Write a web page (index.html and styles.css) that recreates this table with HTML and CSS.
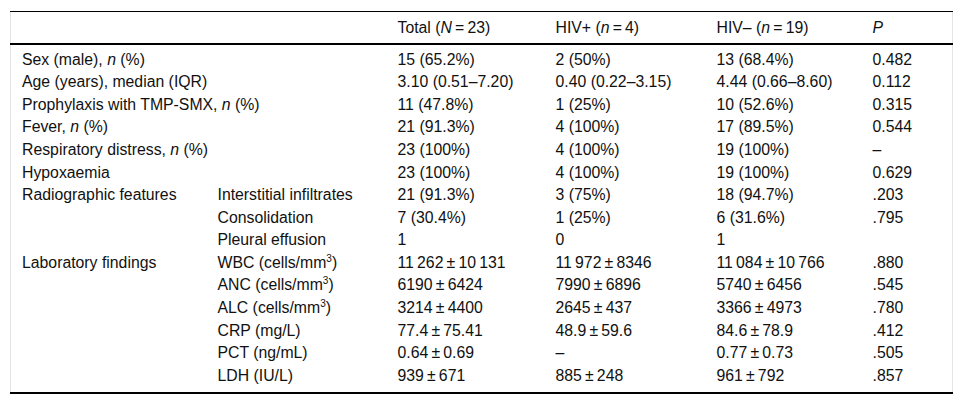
FILE: index.html
```html
<!DOCTYPE html>
<html>
<head>
<meta charset="utf-8">
<link rel="stylesheet" href="styles.css">
</head>
<body>
<div class="wrap">
<table class="data">
<colgroup>
<col class="c1"><col class="c2"><col class="c3"><col class="c4"><col class="c5"><col class="c6">
</colgroup>
<thead>
<tr><th></th><th></th><th>Total (<i>N</i>&#8201;=&#8201;23)</th><th>HIV+ (<i>n</i>&#8201;=&#8201;4)</th><th>HIV&#8211; (<i>n</i>&#8201;=&#8201;19)</th><th><i>P</i></th></tr>
</thead>
<tbody>
<tr class="first"><td colspan="2">Sex (male), <i>n</i> (%)</td><td>15 (65.2%)</td><td>2 (50%)</td><td>13 (68.4%)</td><td>0.482</td></tr>
<tr><td colspan="2">Age (years), median (IQR)</td><td>3.10 (0.51&#8211;7.20)</td><td>0.40 (0.22&#8211;3.15)</td><td>4.44 (0.66&#8211;8.60)</td><td>0.112</td></tr>
<tr><td colspan="2">Prophylaxis with TMP-SMX, <i>n</i> (%)</td><td>11 (47.8%)</td><td>1 (25%)</td><td>10 (52.6%)</td><td>0.315</td></tr>
<tr><td colspan="2">Fever, <i>n</i> (%)</td><td>21 (91.3%)</td><td>4 (100%)</td><td>17 (89.5%)</td><td>0.544</td></tr>
<tr><td colspan="2">Respiratory distress, <i>n</i> (%)</td><td>23 (100%)</td><td>4 (100%)</td><td>19 (100%)</td><td>&#8211;</td></tr>
<tr><td colspan="2">Hypoxaemia</td><td>23 (100%)</td><td>4 (100%)</td><td>19 (100%)</td><td>0.629</td></tr>
<tr><td>Radiographic features</td><td>Interstitial infiltrates</td><td>21 (91.3%)</td><td>3 (75%)</td><td>18 (94.7%)</td><td>.203</td></tr>
<tr><td></td><td>Consolidation</td><td>7 (30.4%)</td><td>1 (25%)</td><td>6 (31.6%)</td><td>.795</td></tr>
<tr><td></td><td>Pleural effusion</td><td>1</td><td>0</td><td>1</td><td></td></tr>
<tr><td>Laboratory findings</td><td>WBC (cells/mm<sup>3</sup>)</td><td>11&#8201;262&#8201;&#177;&#8201;10&#8201;131</td><td>11&#8201;972&#8201;&#177;&#8201;8346</td><td>11&#8201;084&#8201;&#177;&#8201;10&#8201;766</td><td>.880</td></tr>
<tr><td></td><td>ANC (cells/mm<sup>3</sup>)</td><td>6190&#8201;&#177;&#8201;6424</td><td>7990&#8201;&#177;&#8201;6896</td><td>5740&#8201;&#177;&#8201;6456</td><td>.545</td></tr>
<tr><td></td><td>ALC (cells/mm<sup>3</sup>)</td><td>3214&#8201;&#177;&#8201;4400</td><td>2645&#8201;&#177;&#8201;437</td><td>3366&#8201;&#177;&#8201;4973</td><td>.780</td></tr>
<tr><td></td><td>CRP (mg/L)</td><td>77.4&#8201;&#177;&#8201;75.41</td><td>48.9&#8201;&#177;&#8201;59.6</td><td>84.6&#8201;&#177;&#8201;78.9</td><td>.412</td></tr>
<tr><td></td><td>PCT (ng/mL)</td><td>0.64&#8201;&#177;&#8201;0.69</td><td>&#8211;</td><td>0.77&#8201;&#177;&#8201;0.73</td><td>.505</td></tr>
<tr class="last"><td></td><td>LDH (IU/L)</td><td>939&#8201;&#177;&#8201;671</td><td>885&#8201;&#177;&#8201;248</td><td>961&#8201;&#177;&#8201;792</td><td>.857</td></tr>
</tbody>
</table>
</div>
</body>
</html>
```
FILE: styles.css
```css
html, body {
  margin: 0;
  padding: 0;
  background: #fff;
}
body {
  font-family: "Liberation Sans", Arial, sans-serif;
  font-size: 15.8px;
  color: #111;
}
.wrap {
  padding: 11px 10px 0 10px;
}
.data {
  width: 943px;
  border-collapse: collapse;
  table-layout: fixed;
  border-left: 1px solid #e4e4e4;
  border-right: 1px solid #e4e4e4;
  border-bottom: 2px solid #000;
}
.c1 { width: 207px; }
.c2 { width: 180px; }
.c3 { width: 158px; }
.c4 { width: 161px; }
.c5 { width: 156px; }
.c6 { width: auto; }
.data thead th {
  font-weight: normal;
  text-align: left;
  height: 31px;
  padding: 0;
  border-top: 1px solid #000;
  border-bottom: 2px solid #000;
  vertical-align: middle;
}
.data thead th:first-child,
.data td:first-child {
  padding-left: 11px;
}
.data td {
  padding: 0;
  height: 22.57px;
  line-height: 17px;
  vertical-align: middle;
  white-space: nowrap;
}
.data tr.first td { padding-top: 3px; }
.data tr.last td { padding-bottom: 6px; }
sup {
  font-size: 10px;
  line-height: 0;
  vertical-align: 6px;
}
i { font-style: italic; }
```
